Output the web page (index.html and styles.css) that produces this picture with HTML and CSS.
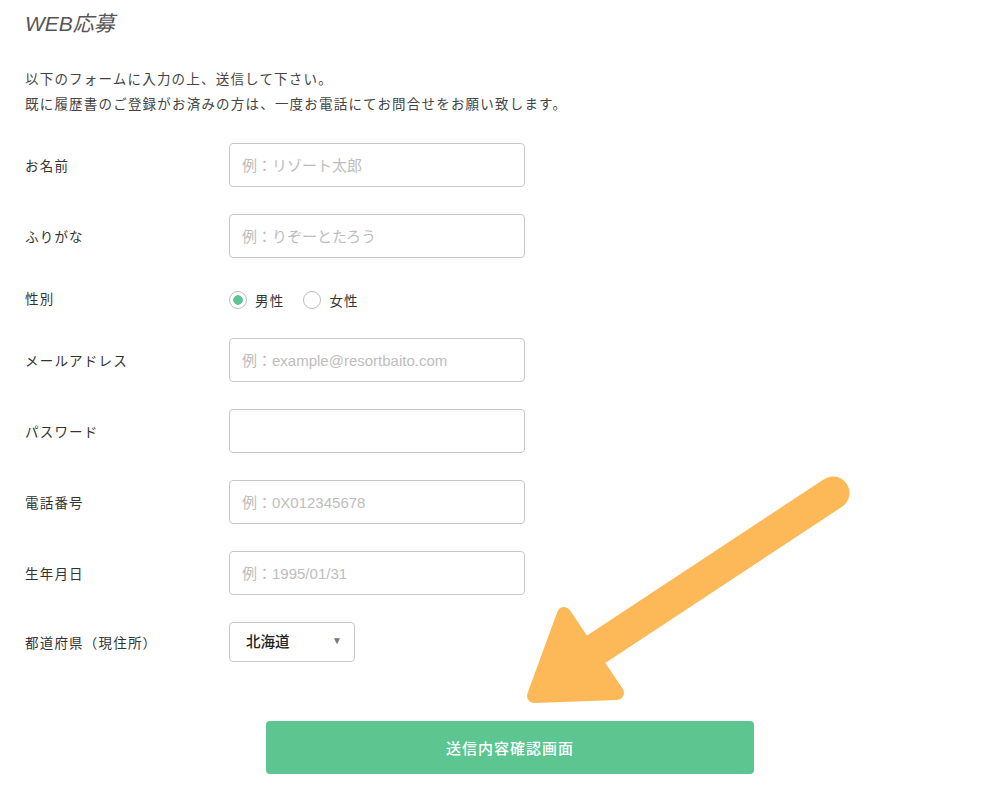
FILE: index.html
```html
<!DOCTYPE html>
<html lang="ja">
<head>
    <meta charset="UTF-8">
    <meta name="viewport" content="width=device-width, initial-scale=1.0">
    <title>WEB応募</title>
    <link rel="stylesheet" href="styles.css">
</head>
<body>
    <div class="page">
        <h1 class="title">WEB応募</h1>
        <p class="intro">
            以下のフォームに入力の上、送信して下さい。<br>
            既に履歴書のご登録がお済みの方は、一度お電話にてお問合せをお願い致します。
        </p>

        <form class="entry-form">
            <div class="row">
                <label for="name">お名前</label>
                <input type="text" id="name" placeholder="例：リゾート太郎">
            </div>
            <div class="row">
                <label for="kana">ふりがな</label>
                <input type="text" id="kana" placeholder="例：りぞーとたろう">
            </div>
            <div class="row row-radio">
                <label>性別</label>
                <div class="radios">
                    <label class="radio"><input type="radio" name="sex" checked> 男性</label>
                    <label class="radio"><input type="radio" name="sex"> 女性</label>
                </div>
            </div>
            <div class="row">
                <label for="email">メールアドレス</label>
                <input type="email" id="email" placeholder="例：example@resortbaito.com">
            </div>
            <div class="row">
                <label for="password">パスワード</label>
                <input type="password" id="password">
            </div>
            <div class="row">
                <label for="tel">電話番号</label>
                <input type="text" id="tel" placeholder="例：0X012345678">
            </div>
            <div class="row">
                <label for="birth">生年月日</label>
                <input type="text" id="birth" placeholder="例：1995/01/31">
            </div>
            <div class="row">
                <label for="pref">都道府県（現住所）</label>
                <div class="select-wrap">
                    <select id="pref">
                        <option>北海道</option>
                        <option>青森県</option>
                        <option>岩手県</option>
                    </select>
                    <span class="select-arrow">&#9660;</span>
                </div>
            </div>

            <div class="actions">
                <button type="submit">送信内容確認画面</button>
            </div>
        </form>
    </div>

    <svg class="pointer" width="1000" height="800" viewBox="0 0 1000 800">
        <line x1="833" y1="493" x2="592" y2="652" stroke="#fdb957" stroke-width="33" stroke-linecap="round"/>
        <polygon points="564,614 534,696 617,693" fill="#fdb957" stroke="#fdb957" stroke-width="14" stroke-linejoin="round"/>
    </svg>
</body>
</html>
```

FILE: styles.css
```css
* {
    margin: 0;
    padding: 0;
    box-sizing: border-box;
}

body {
    font-family: "Liberation Sans", "Noto Sans CJK JP", sans-serif;
    background-color: #ffffff;
    color: #333;
    position: relative;
}

.page {
    width: 995px;
    padding: 10px 0 30px 25px;
}

.title {
    font-size: 21px;
    line-height: 28px;
    font-weight: normal;
    font-style: italic;
    color: #555;
}

.intro {
    margin-top: 29px;
    font-size: 13.5px;
    line-height: 25px;
    letter-spacing: 1.2px;
    color: #444;
}

.entry-form {
    margin-top: 26px;
    display: flex;
    flex-direction: column;
    gap: 27px;
}

.row {
    display: flex;
    align-items: center;
}

.row > label {
    width: 204px;
    font-size: 13.5px;
    letter-spacing: 1.2px;
    color: #333;
}

.row input[type="text"],
.row input[type="email"],
.row input[type="password"] {
    width: 296px;
    height: 44px;
    padding: 0 12px;
    border: 1px solid #c8c8c8;
    border-radius: 4px;
    font-family: inherit;
    font-size: 15px;
    color: #333;
}

.row input::placeholder {
    color: #bdbdbd;
}

.row-radio {
    height: 26px;
}

.radios {
    display: flex;
    gap: 19px;
    margin-top: 4px;
}

.radio {
    display: flex;
    align-items: center;
    gap: 8px;
    font-size: 13.5px;
    letter-spacing: 1.2px;
    color: #333;
}

.radio input {
    appearance: none;
    width: 18px;
    height: 18px;
    border: 1px solid #bbb;
    border-radius: 50%;
    background-color: #fff;
}

.radio input:checked {
    background: radial-gradient(circle, #5cc590 0 4.5px, #fff 5px);
}

.select-wrap {
    position: relative;
    width: 126px;
}

.select-wrap select {
    appearance: none;
    width: 126px;
    height: 40px;
    padding: 0 16px;
    border: 1px solid #c8c8c8;
    border-radius: 4px;
    background-color: #fff;
    font-family: inherit;
    font-size: 14.5px;
    font-weight: 500;
    color: #222;
}

.select-arrow {
    position: absolute;
    right: 13px;
    top: 13px;
    font-size: 10px;
    color: #777;
    pointer-events: none;
}

.actions {
    margin-top: 32px;
    display: flex;
    justify-content: center;
}

.actions button {
    width: 488px;
    height: 53px;
    background-color: #5cc590;
    color: #fff;
    border: none;
    border-radius: 4px;
    font-family: inherit;
    font-size: 15px;
    font-weight: 500;
    letter-spacing: 1px;
    cursor: pointer;
}

.pointer {
    position: absolute;
    top: 0;
    left: 0;
    pointer-events: none;
}
```
